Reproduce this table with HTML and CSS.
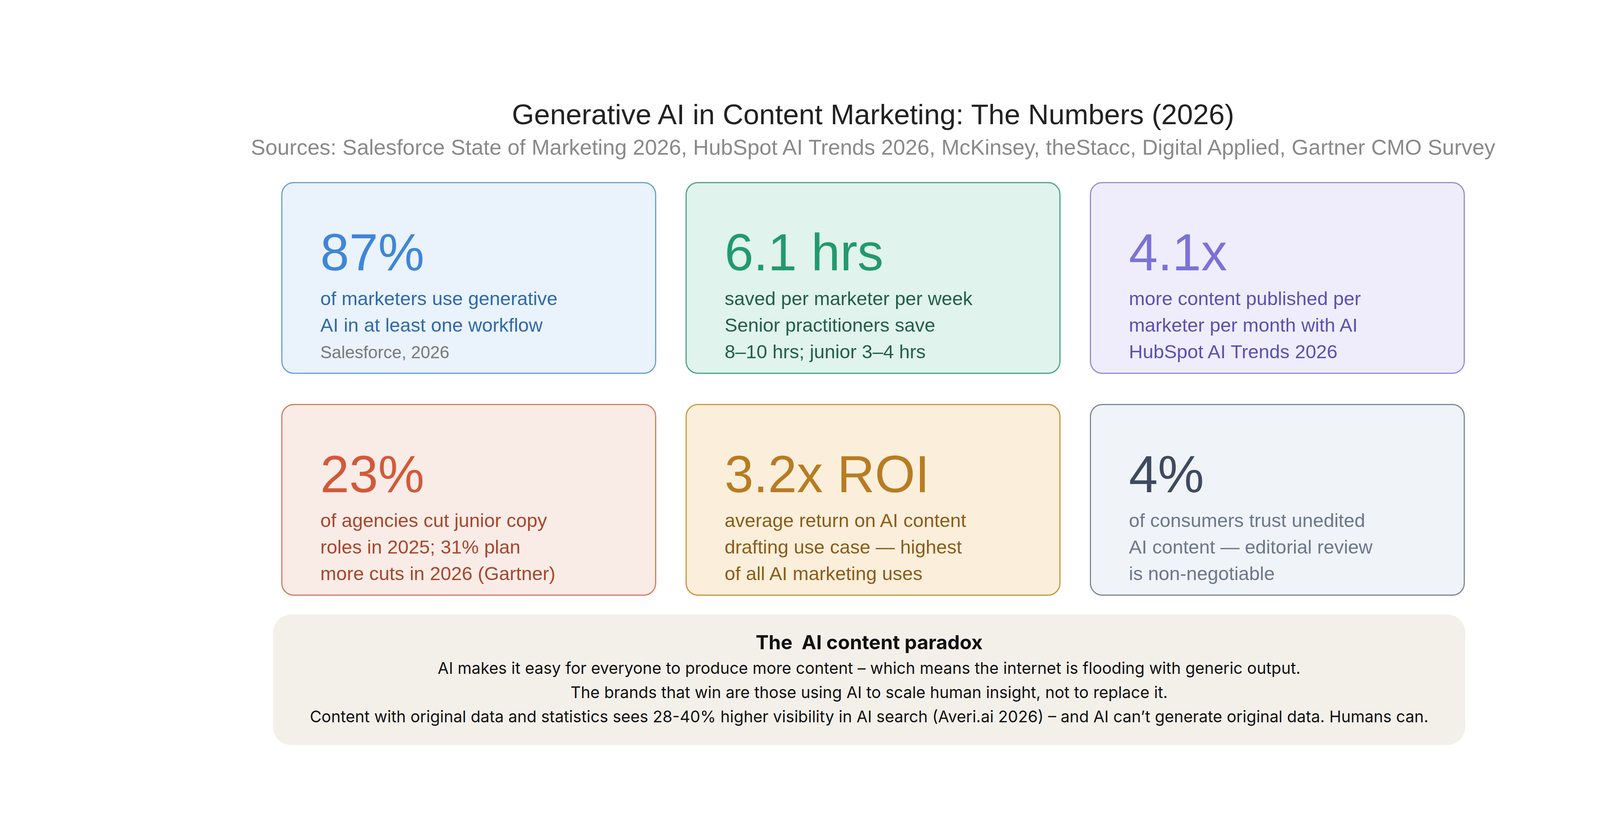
FILE: index.html
```html
<!DOCTYPE html>
<html lang="en">
<head>
<meta charset="utf-8">
<title>Generative AI in Content Marketing: The Numbers (2026)</title>
<link rel="stylesheet" href="styles.css">
</head>
<body>
<header class="head">
  <h1 class="title">Generative AI in Content Marketing: The Numbers (2026)</h1>
  <p class="subtitle">Sources: Salesforce State of Marketing 2026, HubSpot AI Trends 2026, McKinsey, theStacc, Digital Applied, Gartner CMO Survey</p>
</header>

<main class="page">
  <section class="grid">
    <div class="card blue">
      <div class="num">87%</div>
      <p class="desc">of marketers use generative<br>AI in at least one workflow<br><span class="src">Salesforce, 2026</span></p>
    </div>
    <div class="card green">
      <div class="num">6.1 hrs</div>
      <p class="desc">saved per marketer per week<br>Senior practitioners save<br>8–10 hrs; junior 3–4 hrs</p>
    </div>
    <div class="card purple">
      <div class="num">4.1x</div>
      <p class="desc">more content published per<br>marketer per month with AI<br>HubSpot AI Trends 2026</p>
    </div>
    <div class="card red">
      <div class="num">23%</div>
      <p class="desc">of agencies cut junior copy<br>roles in 2025; 31% plan<br>more cuts in 2026 (Gartner)</p>
    </div>
    <div class="card amber">
      <div class="num">3.2x ROI</div>
      <p class="desc">average return on AI content<br>drafting use case — highest<br>of all AI marketing uses</p>
    </div>
    <div class="card slate">
      <div class="num">4%</div>
      <p class="desc">of consumers trust unedited<br>AI content — editorial review<br>is non-negotiable</p>
    </div>
  </section>

  <section class="paradox">
    <h2 class="paradox-title">The &nbsp;AI content paradox</h2>
    <p class="paradox-line">AI makes it easy for everyone to produce more content – which means the internet is flooding with generic output.</p>
    <p class="paradox-line">The brands that win are those using AI to scale human insight, not to replace it.</p>
    <p class="paradox-line">Content with original data and statistics sees 28-40% higher visibility in AI search (Averi.ai 2026) – and AI can’t generate original data. Humans can.</p>
  </section>
</main>
</body>
</html>
```

FILE: styles.css
```css
html {
  overflow: hidden;
}

html, body {
  margin: 0;
  padding: 0;
  background: #ffffff;
}

body {
  font-family: "Liberation Sans", Arial, sans-serif;
  height: 2094px;
}

.head {
  width: 3470px;
  margin-left: 500px;
  padding-top: 253px;
  text-align: center;
}

.title {
  margin: 0;
  font-size: 73px;
  line-height: 80px;
  font-weight: 400;
  color: #222222;
}

.subtitle {
  margin: 9px 0 0;
  font-size: 55.5px;
  line-height: 70px;
  color: #8a8a8a;
}

.page {
  width: 3030px;
  margin-left: 720px;
}

.grid {
  margin-top: 54px;
  display: grid;
  grid-template-columns: repeat(3, 960px);
  grid-auto-rows: 491px;
  column-gap: 75px;
  row-gap: 77px;
}

.card {
  box-sizing: border-box;
  border: 3px solid;
  border-radius: 32px;
  padding: 102px 0 0 97px;
}

.num {
  font-size: 133px;
  line-height: 150px;
}

.desc {
  margin: 9px 0 0;
  font-size: 49px;
  line-height: 68px;
}

.src {
  font-size: 44px;
  color: #7a7a7a;
}

.blue   { background: #eaf2fc; border-color: #6a9fd6; }
.blue .num   { color: #3f86d8; }
.blue .desc  { color: #2f6aaa; }

.green  { background: #e0f3ec; border-color: #4ba585; }
.green .num  { color: #22996f; }
.green .desc { color: #245e4d; }

.purple { background: #efedfb; border-color: #958dd2; }
.purple .num  { color: #7c72d6; }
.purple .desc { color: #5b51b2; }

.red    { background: #f9ece7; border-color: #d47c60; }
.red .num  { color: #d3593a; }
.red .desc { color: #a7472c; }

.amber  { background: #fbefdc; border-color: #c9963f; }
.amber .num  { color: #b87c22; }
.amber .desc { color: #8c5c18; }

.slate  { background: #f0f3f8; border-color: #7d879a; }
.slate .num  { color: #3e4a5e; }
.slate .desc { color: #6b788d; }

.paradox {
  box-sizing: border-box;
  margin: 48px 0 0 -21px;
  width: 3052px;
  height: 334px;
  padding-top: 40px;
  background: #f3f0ea;
  border-radius: 46px;
  text-align: center;
  font-family: Inter, "Open Sans", sans-serif;
  color: #111111;
}

.paradox-title {
  margin: 0 0 4px;
  font-size: 50px;
  line-height: 62px;
  font-weight: 700;
}

.paradox-line {
  margin: 0;
  font-size: 41px;
  line-height: 62px;
}
```
